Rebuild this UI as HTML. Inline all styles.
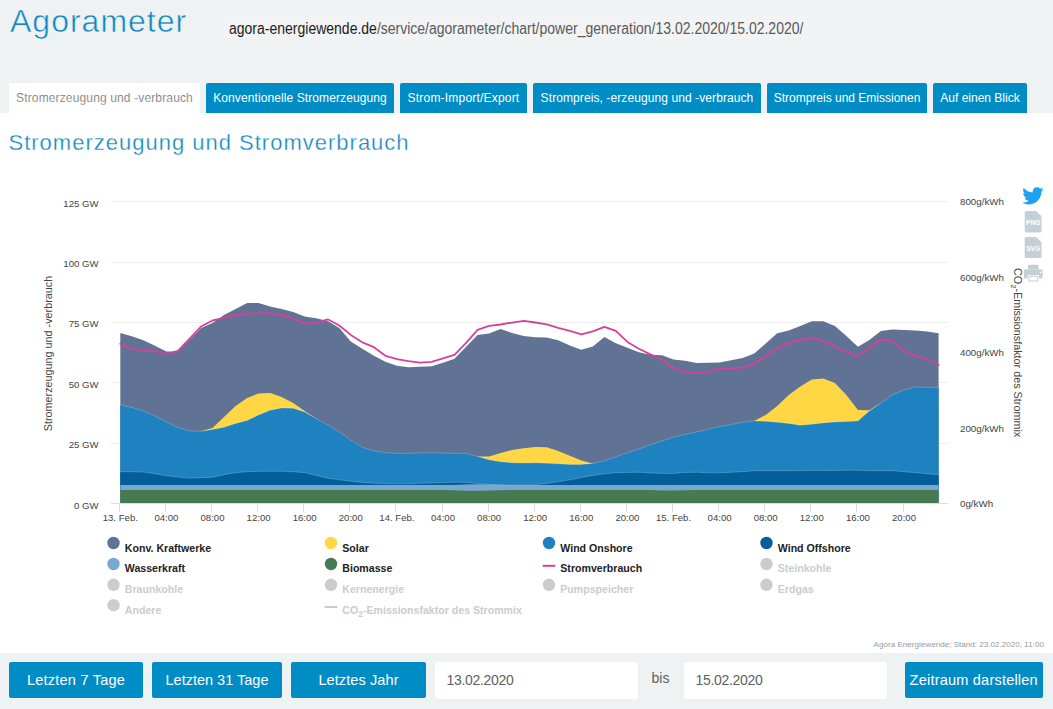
<!DOCTYPE html>
<html lang="de">
<head>
<meta charset="utf-8">
<title>Agorameter</title>
<style>
*{box-sizing:border-box;margin:0;padding:0}
html,body{width:1053px;height:709px;overflow:hidden;background:#fff}
body{font-family:"Liberation Sans",sans-serif;position:relative;color:#333}
.hdr{position:absolute;left:0;top:0;width:1053px;height:113px;background:#eff2f3}
.logo{position:absolute;left:10px;top:2.5px;font-size:32px;line-height:37px;letter-spacing:1px;color:#0f87c1;-webkit-text-stroke:.55px #eff2f3;white-space:nowrap}
.url{position:absolute;left:229.4px;top:19px;font-size:16px;line-height:20px;white-space:nowrap;color:#5a5a5a;transform:scaleX(.875);transform-origin:0 50%}
.url b{font-weight:400;color:#1b1b1b}
.tab{position:absolute;top:83px;height:30px;background:#008dc6;color:#fff;font-size:12px;line-height:30px;text-align:center;white-space:nowrap;border-radius:2px 2px 0 0}
.tab.act{background:#fff;color:#6a6a6a;-webkit-text-stroke:.2px #fff}
.tab span{display:inline-block}
h2{position:absolute;left:8.5px;top:130px;font-size:22px;line-height:26px;font-weight:400;letter-spacing:1px;color:#0f87c1;-webkit-text-stroke:.3px #fff;white-space:nowrap}
svg.chart{position:absolute;left:0;top:0}
.ft{position:absolute;left:0;top:653px;width:1053px;height:56px;background:#eff2f3}
.btn{position:absolute;top:662px;height:36px;background:#008dc6;color:#fff;font-size:14.5px;line-height:36px;text-align:center;border-radius:2px;white-space:nowrap}
.inp{position:absolute;top:662px;height:37px;background:#fff;border-radius:3px;color:#606060;font-size:14px;letter-spacing:-.3px;line-height:37px;padding-left:11.5px;white-space:nowrap}
.bis{position:absolute;left:651.5px;top:667.5px;font-size:14px;line-height:20px;color:#606060}
.credit{position:absolute;right:9px;top:640px;font-size:8.1px;line-height:10px;color:#999;white-space:nowrap}
</style>
</head>
<body>
<div class="hdr"></div>
<div style="position:absolute;left:224px;top:16px;width:584px;height:23px;background:#f1f3f4"></div>
<div class="logo">Agorameter</div>
<div class="url"><b>agora-energiewende.de</b>/service/agorameter/chart/power_generation/13.02.2020/15.02.2020/</div>

<div class="tab act" style="left:9px;width:191px"><span style="letter-spacing:.14px">Stromerzeugung und -verbrauch</span></div>
<div class="tab" style="left:206px;width:188px"><span style="letter-spacing:.1px">Konventionelle Stromerzeugung</span></div>
<div class="tab" style="left:400px;width:127px"><span style="letter-spacing:.2px">Strom-Import/Export</span></div>
<div class="tab" style="left:533px;width:228px"><span style="letter-spacing:.09px">Strompreis, -erzeugung und -verbrauch</span></div>
<div class="tab" style="left:767px;width:160px"><span>Strompreis und Emissionen</span></div>
<div class="tab" style="left:933px;width:94px"><span>Auf einen Blick</span></div>

<h2>Stromerzeugung und Stromverbrauch</h2>

<svg class="chart" width="1053" height="709" viewBox="0 0 1053 709" font-family="Liberation Sans, sans-serif">
<!-- gridlines -->
<g stroke="#eeeeee" stroke-width="1" shape-rendering="crispEdges">
<line x1="111" x2="948" y1="201.5" y2="201.5"/>
<line x1="111" x2="948" y1="262.5" y2="262.5"/>
<line x1="111" x2="948" y1="322.5" y2="322.5"/>
<line x1="111" x2="948" y1="382.5" y2="382.5"/>
<line x1="111" x2="948" y1="443.5" y2="443.5"/>
</g>

<path d="M120.3,332.9 L131.8,336.3 L143.3,340.3 L154.9,345.8 L166.4,351.4 L177.9,351.4 L189.4,339.9 L201.0,327.9 L212.5,322.9 L224.0,314.9 L235.6,308.9 L247.1,303.0 L258.6,303.0 L270.1,306.4 L281.6,308.9 L293.2,311.9 L304.7,316.5 L316.2,318.3 L327.8,320.9 L339.3,327.9 L350.8,341.5 L362.3,348.8 L373.9,355.8 L385.4,361.8 L396.9,365.8 L408.4,367.2 L420.0,366.8 L431.5,366.2 L443.0,362.8 L454.5,358.8 L466.1,346.8 L477.6,334.9 L489.1,333.5 L500.6,328.9 L512.1,332.9 L523.7,335.9 L535.2,337.3 L546.7,337.5 L558.2,340.3 L569.8,345.4 L581.3,349.8 L592.8,346.4 L604.4,336.9 L615.9,343.3 L627.4,347.8 L638.9,352.2 L650.4,354.8 L662.0,355.2 L673.5,359.4 L685.0,360.8 L696.5,363.0 L708.1,362.8 L719.6,362.6 L731.1,360.2 L742.6,358.0 L754.2,353.5 L765.7,343.4 L777.2,333.2 L788.8,330.5 L800.3,325.9 L811.8,321.3 L823.3,321.3 L834.9,325.9 L846.4,335.9 L857.9,346.8 L869.4,339.9 L880.9,330.9 L892.5,329.5 L904.0,329.9 L915.5,330.5 L927.0,331.5 L938.6,333.3 L938.6,503.5 L120.3,503.5Z" fill="#617394"/>
<path d="M201.0,431.3 L212.5,427.9 L224.0,416.9 L235.6,405.9 L247.1,398.0 L258.6,393.6 L270.1,393.0 L281.6,397.0 L293.2,402.9 L304.7,410.9 L316.2,418.7 L316.2,419.3 L304.7,412.5 L293.2,408.9 L281.6,408.5 L270.1,410.9 L258.6,415.5 L247.1,421.1 L235.6,424.1 L224.0,427.9 L212.5,430.1 L201.0,431.9Z" fill="#ffd744"/>
<path d="M477.6,456.4 L489.1,456.4 L500.6,452.9 L512.1,450.1 L523.7,448.3 L535.2,446.9 L546.7,447.3 L558.2,450.9 L569.8,455.8 L581.3,460.4 L592.8,463.4 L592.8,464.0 L581.3,465.0 L569.8,465.0 L558.2,464.4 L546.7,463.8 L535.2,463.4 L523.7,463.6 L512.1,463.3 L500.6,462.4 L489.1,460.4 L477.6,457.0Z" fill="#ffd744"/>
<path d="M754.2,420.9 L765.7,414.9 L777.2,405.9 L788.8,394.9 L800.3,386.6 L811.8,379.4 L823.3,378.4 L834.9,383.0 L846.4,394.9 L857.9,409.9 L869.4,410.3 L880.9,402.9 L880.9,403.5 L869.4,411.5 L857.9,421.5 L846.4,422.1 L834.9,422.5 L823.3,423.5 L811.8,424.8 L800.3,425.8 L788.8,424.1 L777.2,422.9 L765.7,421.9 L754.2,421.5Z" fill="#ffd744"/>

<path d="M120.3,404.9 L131.8,407.5 L143.3,410.9 L154.9,415.9 L166.4,421.9 L177.9,427.3 L189.4,430.9 L201.0,431.3 L212.5,429.5 L224.0,427.3 L235.6,423.5 L247.1,420.5 L258.6,414.9 L270.1,410.3 L281.6,407.9 L293.2,408.3 L304.7,411.9 L316.2,418.7 L327.8,424.9 L339.3,431.9 L350.8,440.3 L362.3,447.3 L373.9,450.9 L385.4,452.5 L396.9,453.4 L408.4,453.4 L420.0,452.9 L431.5,452.7 L443.0,453.1 L454.5,453.3 L466.1,453.4 L477.6,456.4 L489.1,459.8 L500.6,461.8 L512.1,462.7 L523.7,463.0 L535.2,462.8 L546.7,463.2 L558.2,463.8 L569.8,464.4 L581.3,464.4 L592.8,463.4 L604.4,460.8 L615.9,456.8 L627.4,452.9 L638.9,448.9 L650.4,444.9 L662.0,440.9 L673.5,437.3 L685.0,434.5 L696.5,431.9 L708.1,429.3 L719.6,426.5 L731.1,424.5 L742.6,422.3 L754.2,420.9 L765.7,421.3 L777.2,422.3 L788.8,423.5 L800.3,425.2 L811.8,424.2 L823.3,422.9 L834.9,421.9 L846.4,421.5 L857.9,420.9 L869.4,410.9 L880.9,402.9 L892.5,394.9 L904.0,389.9 L915.5,387.0 L927.0,387.4 L938.6,387.4 L938.6,503.5 L120.3,503.5Z" fill="#1f82c0"/>
<path d="M120.3,471.7 L131.8,471.7 L143.3,472.1 L154.9,473.7 L166.4,475.7 L177.9,477.1 L189.4,478.1 L201.0,477.7 L212.5,477.3 L224.0,474.7 L235.6,472.7 L247.1,471.7 L258.6,471.3 L270.1,471.3 L281.6,471.3 L293.2,471.7 L304.7,472.7 L316.2,475.5 L327.8,478.2 L339.3,479.8 L350.8,481.2 L362.3,482.4 L373.9,483.2 L385.4,483.6 L396.9,483.8 L408.4,483.8 L420.0,483.2 L431.5,483.0 L443.0,482.6 L454.5,482.2 L466.1,482.4 L477.6,483.4 L489.1,484.6 L500.6,484.8 L512.1,484.8 L523.7,484.8 L535.2,484.6 L546.7,483.4 L558.2,481.8 L569.8,479.8 L581.3,477.4 L592.8,475.4 L604.4,473.8 L615.9,472.8 L627.4,472.4 L638.9,472.2 L650.4,473.0 L662.0,473.4 L673.5,473.4 L685.0,472.6 L696.5,472.2 L708.1,472.8 L719.6,472.8 L731.1,472.3 L742.6,471.7 L754.2,470.7 L765.7,470.7 L777.2,470.7 L788.8,470.7 L800.3,470.6 L811.8,470.5 L823.3,470.5 L834.9,470.4 L846.4,470.3 L857.9,470.3 L869.4,470.7 L880.9,470.7 L892.5,470.7 L904.0,471.7 L915.5,472.7 L927.0,473.7 L938.6,474.7 L938.6,503.5 L120.3,503.5Z" fill="#035e99"/>
<path d="M120.3,485.1 L131.8,485.1 L143.3,485.1 L154.9,485.1 L166.4,485.1 L177.9,485.1 L189.4,485.1 L201.0,485.1 L212.5,485.1 L224.0,485.1 L235.6,485.1 L247.1,485.1 L258.6,485.1 L270.1,485.1 L281.6,485.1 L293.2,485.1 L304.7,485.1 L316.2,485.1 L327.8,485.1 L339.3,485.1 L350.8,485.1 L362.3,485.1 L373.9,485.1 L385.4,485.1 L396.9,485.1 L408.4,485.1 L420.0,485.1 L431.5,485.1 L443.0,485.1 L454.5,485.1 L466.1,484.6 L477.6,484.3 L489.1,484.4 L500.6,484.8 L512.1,485.1 L523.7,485.1 L535.2,485.1 L546.7,485.1 L558.2,485.1 L569.8,485.1 L581.3,485.1 L592.8,485.1 L604.4,485.1 L615.9,485.1 L627.4,485.1 L638.9,485.1 L650.4,485.1 L662.0,485.1 L673.5,485.1 L685.0,485.1 L696.5,485.1 L708.1,485.1 L719.6,485.1 L731.1,485.1 L742.6,485.1 L754.2,485.1 L765.7,485.1 L777.2,485.1 L788.8,485.1 L800.3,485.1 L811.8,485.1 L823.3,485.1 L834.9,485.1 L846.4,485.1 L857.9,485.1 L869.4,485.1 L880.9,485.1 L892.5,485.1 L904.0,485.1 L915.5,485.1 L927.0,485.1 L938.6,485.1 L938.6,503.5 L120.3,503.5Z" fill="#7aa7cf"/>
<path d="M120.3,490.0 L131.8,490.0 L143.3,490.0 L154.9,490.0 L166.4,490.0 L177.9,490.0 L189.4,490.0 L201.0,490.0 L212.5,490.0 L224.0,490.0 L235.6,490.0 L247.1,490.0 L258.6,490.0 L270.1,490.0 L281.6,490.0 L293.2,490.0 L304.7,490.0 L316.2,490.0 L327.8,490.0 L339.3,490.0 L350.8,490.0 L362.3,490.0 L373.9,490.0 L385.4,490.0 L396.9,490.0 L408.4,490.0 L420.0,490.0 L431.5,490.0 L443.0,490.0 L454.5,490.3 L466.1,490.7 L477.6,490.8 L489.1,490.6 L500.6,490.3 L512.1,490.0 L523.7,490.0 L535.2,490.0 L546.7,490.0 L558.2,490.0 L569.8,490.0 L581.3,490.0 L592.8,490.0 L604.4,490.0 L615.9,490.0 L627.4,490.0 L638.9,490.0 L650.4,490.0 L662.0,490.4 L673.5,490.6 L685.0,490.3 L696.5,490.0 L708.1,490.0 L719.6,490.0 L731.1,490.0 L742.6,490.0 L754.2,490.0 L765.7,490.0 L777.2,490.0 L788.8,490.0 L800.3,490.0 L811.8,490.0 L823.3,490.0 L834.9,490.0 L846.4,490.0 L857.9,490.0 L869.4,490.0 L880.9,490.0 L892.5,490.0 L904.0,490.0 L915.5,490.0 L927.0,490.0 L938.6,490.0 L938.6,503.5 L120.3,503.5Z" fill="#487a51"/>
<path d="M120.3,404.9 L131.8,407.5 L143.3,410.9 L154.9,415.9 L166.4,421.9 L177.9,427.3 L189.4,430.9 L201.0,431.3 L212.5,429.5 L224.0,427.3 L235.6,423.5 L247.1,420.5 L258.6,414.9 L270.1,410.3 L281.6,407.9 L293.2,408.3 L304.7,411.9 L316.2,418.7 L327.8,424.9 L339.3,431.9 L350.8,440.3 L362.3,447.3 L373.9,450.9 L385.4,452.5 L396.9,453.4 L408.4,453.4 L420.0,452.9 L431.5,452.7 L443.0,453.1 L454.5,453.3 L466.1,453.4 L477.6,456.4 L489.1,459.8 L500.6,461.8 L512.1,462.7 L523.7,463.0 L535.2,462.8 L546.7,463.2 L558.2,463.8 L569.8,464.4 L581.3,464.4 L592.8,463.4 L604.4,460.8 L615.9,456.8 L627.4,452.9 L638.9,448.9 L650.4,444.9 L662.0,440.9 L673.5,437.3 L685.0,434.5 L696.5,431.9 L708.1,429.3 L719.6,426.5 L731.1,424.5 L742.6,422.3 L754.2,420.9 L765.7,421.3 L777.2,422.3 L788.8,423.5 L800.3,425.2 L811.8,424.2 L823.3,422.9 L834.9,421.9 L846.4,421.5 L857.9,420.9 L869.4,410.9 L880.9,402.9 L892.5,394.9 L904.0,389.9 L915.5,387.0 L927.0,387.4 L938.6,387.4" fill="none" stroke="#fff" stroke-opacity=".3" stroke-width=".7"/>
<path d="M120.3,471.7 L131.8,471.7 L143.3,472.1 L154.9,473.7 L166.4,475.7 L177.9,477.1 L189.4,478.1 L201.0,477.7 L212.5,477.3 L224.0,474.7 L235.6,472.7 L247.1,471.7 L258.6,471.3 L270.1,471.3 L281.6,471.3 L293.2,471.7 L304.7,472.7 L316.2,475.5 L327.8,478.2 L339.3,479.8 L350.8,481.2 L362.3,482.4 L373.9,483.2 L385.4,483.6 L396.9,483.8 L408.4,483.8 L420.0,483.2 L431.5,483.0 L443.0,482.6 L454.5,482.2 L466.1,482.4 L477.6,483.4 L489.1,484.6 L500.6,484.8 L512.1,484.8 L523.7,484.8 L535.2,484.6 L546.7,483.4 L558.2,481.8 L569.8,479.8 L581.3,477.4 L592.8,475.4 L604.4,473.8 L615.9,472.8 L627.4,472.4 L638.9,472.2 L650.4,473.0 L662.0,473.4 L673.5,473.4 L685.0,472.6 L696.5,472.2 L708.1,472.8 L719.6,472.8 L731.1,472.3 L742.6,471.7 L754.2,470.7 L765.7,470.7 L777.2,470.7 L788.8,470.7 L800.3,470.6 L811.8,470.5 L823.3,470.5 L834.9,470.4 L846.4,470.3 L857.9,470.3 L869.4,470.7 L880.9,470.7 L892.5,470.7 L904.0,471.7 L915.5,472.7 L927.0,473.7 L938.6,474.7" fill="none" stroke="#fff" stroke-opacity=".3" stroke-width=".7"/>
<path d="M120.3,343.8 L131.8,349.2 L143.3,351.2 L154.9,350.8 L166.4,354.2 L177.9,350.8 L189.4,338.9 L201.0,326.5 L212.5,320.5 L224.0,317.9 L235.6,315.5 L247.1,313.9 L258.6,313.3 L270.1,313.1 L281.6,314.9 L293.2,318.9 L304.7,323.5 L316.2,322.9 L327.8,319.3 L339.3,325.5 L350.8,334.9 L362.3,342.3 L373.9,347.2 L385.4,355.8 L396.9,359.2 L408.4,361.2 L420.0,362.6 L431.5,361.8 L443.0,358.4 L454.5,354.8 L466.1,342.9 L477.6,329.9 L489.1,325.9 L500.6,324.5 L512.1,322.6 L523.7,320.9 L535.2,322.5 L546.7,324.3 L558.2,327.9 L569.8,330.9 L581.3,334.3 L592.8,331.3 L604.4,326.9 L615.9,330.9 L627.4,341.9 L638.9,348.8 L650.4,354.4 L662.0,359.8 L673.5,368.4 L685.0,371.8 L696.5,373.4 L708.1,371.6 L719.6,368.6 L731.1,368.7 L742.6,367.6 L754.2,364.1 L765.7,356.2 L777.2,348.2 L788.8,343.3 L800.3,339.9 L811.8,337.5 L823.3,340.9 L834.9,346.4 L846.4,351.8 L857.9,356.4 L869.4,347.8 L880.9,339.5 L892.5,340.9 L904.0,350.8 L915.5,355.8 L927.0,358.8 L938.6,364.8" fill="none" stroke="#d64198" stroke-width="1.8" stroke-linejoin="round" stroke-linecap="round"/>

<!-- x axis -->
<g stroke="#d6ddef" stroke-width="1" shape-rendering="crispEdges">
<line x1="111" x2="948" y1="503.5" y2="503.5"/>
<line x1="119.5" x2="119.5" y1="503.5" y2="512"/>
<line x1="165.5" x2="165.5" y1="503.5" y2="512"/>
<line x1="211.5" x2="211.5" y1="503.5" y2="512"/>
<line x1="257.5" x2="257.5" y1="503.5" y2="512"/>
<line x1="303.5" x2="303.5" y1="503.5" y2="512"/>
<line x1="349.5" x2="349.5" y1="503.5" y2="512"/>
<line x1="395.5" x2="395.5" y1="503.5" y2="512"/>
<line x1="442.5" x2="442.5" y1="503.5" y2="512"/>
<line x1="488.5" x2="488.5" y1="503.5" y2="512"/>
<line x1="534.5" x2="534.5" y1="503.5" y2="512"/>
<line x1="580.5" x2="580.5" y1="503.5" y2="512"/>
<line x1="626.5" x2="626.5" y1="503.5" y2="512"/>
<line x1="672.5" x2="672.5" y1="503.5" y2="512"/>
<line x1="718.5" x2="718.5" y1="503.5" y2="512"/>
<line x1="764.5" x2="764.5" y1="503.5" y2="512"/>
<line x1="810.5" x2="810.5" y1="503.5" y2="512"/>
<line x1="856.5" x2="856.5" y1="503.5" y2="512"/>
<line x1="903.5" x2="903.5" y1="503.5" y2="512"/>

</g>
<g font-size="9.6" fill="#444" text-anchor="middle">
<text x="120.3" y="520.7">13. Feb.</text>
<text x="166.4" y="520.7">04:00</text>
<text x="212.5" y="520.7">08:00</text>
<text x="258.6" y="520.7">12:00</text>
<text x="304.7" y="520.7">16:00</text>
<text x="350.8" y="520.7">20:00</text>
<text x="396.9" y="520.7">14. Feb.</text>
<text x="443.0" y="520.7">04:00</text>
<text x="489.1" y="520.7">08:00</text>
<text x="535.2" y="520.7">12:00</text>
<text x="581.3" y="520.7">16:00</text>
<text x="627.4" y="520.7">20:00</text>
<text x="673.5" y="520.7">15. Feb.</text>
<text x="719.6" y="520.7">04:00</text>
<text x="765.7" y="520.7">08:00</text>
<text x="811.8" y="520.7">12:00</text>
<text x="857.9" y="520.7">16:00</text>
<text x="904.0" y="520.7">20:00</text>
</g>
<g font-size="9.6" fill="#444" text-anchor="end">
<text x="98.5" y="206.5">125 GW</text>
<text x="98.5" y="266.9">100 GW</text>
<text x="98.5" y="327.3">75 GW</text>
<text x="98.5" y="387.7">50 GW</text>
<text x="98.5" y="448.1">25 GW</text>
<text x="98.5" y="508.5">0 GW</text>
</g>
<g font-size="9.75" fill="#444" text-anchor="start">
<text x="960" y="205.3">800g/kWh</text>
<text x="960" y="280.8">600g/kWh</text>
<text x="960" y="356.3">400g/kWh</text>
<text x="960" y="431.8">200g/kWh</text>
<text x="960" y="507.3">0g/kWh</text>
</g>
<text font-size="10.8" fill="#444" text-anchor="middle" transform="translate(52,353.5) rotate(-90)">Stromerzeugung und -verbrauch</text>
<text font-size="10.8" fill="#444" text-anchor="middle" transform="translate(1013.9,352.6) rotate(90)">CO<tspan font-size="7.5" dy="2.5">2</tspan><tspan dy="-2.5">-Emissionsfaktor des Strommix</tspan></text>
<g font-size="10.6" font-weight="bold">
<circle cx="113.5" cy="543" r="6.2" fill="#617394"/>
<text x="124.8" y="551.7" fill="#222">Konv. Kraftwerke</text>
<circle cx="331" cy="543" r="6.2" fill="#ffd744"/>
<text x="342.3" y="551.7" fill="#222">Solar</text>
<circle cx="549" cy="543" r="6.2" fill="#1f82c0"/>
<text x="560.3" y="551.7" fill="#222">Wind Onshore</text>
<circle cx="766.5" cy="543" r="6.2" fill="#035e99"/>
<text x="777.8" y="551.7" fill="#222">Wind Offshore</text>
<circle cx="113.5" cy="564" r="6.2" fill="#7aa7cf"/>
<text x="124.8" y="571.6" fill="#222">Wasserkraft</text>
<circle cx="331" cy="564" r="6.2" fill="#487a51"/>
<text x="342.3" y="571.6" fill="#222">Biomasse</text>
<line x1="542.7" x2="555.3" y1="565.8" y2="565.8" stroke="#d64198" stroke-width="2"/>
<text x="560.3" y="571.6" fill="#222">Stromverbrauch</text>
<circle cx="766.5" cy="564" r="6.2" fill="#ccc"/>
<text x="777.8" y="571.6" fill="#ccc">Steinkohle</text>
<circle cx="113.5" cy="584.8" r="6.2" fill="#ccc"/>
<text x="124.8" y="593.2" fill="#ccc">Braunkohle</text>
<circle cx="331" cy="584.8" r="6.2" fill="#ccc"/>
<text x="342.3" y="593.2" fill="#ccc">Kernenergie</text>
<circle cx="549" cy="584.8" r="6.2" fill="#ccc"/>
<text x="560.3" y="593.2" fill="#ccc">Pumpspeicher</text>
<circle cx="766.5" cy="584.8" r="6.2" fill="#ccc"/>
<text x="777.8" y="593.2" fill="#ccc">Erdgas</text>
<circle cx="113.5" cy="605.2" r="6.2" fill="#ccc"/>
<text x="124.8" y="614.2" fill="#ccc">Andere</text>
<line x1="324.7" x2="337.3" y1="607.0" y2="607.0" stroke="#ccc" stroke-width="2"/>
<text x="342.3" y="614.2" fill="#ccc">CO<tspan font-size="8.5" dy="2.5">2</tspan><tspan dy="-2.5">-Emissionsfaktor des Strommix</tspan></text>
</g>

<!-- twitter -->
<g transform="translate(1022.3,187) scale(0.885)">
<path fill="#1da1f2" d="M23.954 2.569c-.885.389-1.83.654-2.825.775 1.014-.611 1.794-1.574 2.163-2.723-.951.555-2.005.959-3.127 1.184-.896-.959-2.173-1.559-3.591-1.559-2.717 0-4.92 2.203-4.920 4.917 0 .39.045.765.127 1.124C7.691 6.094 4.066 4.13 1.64 1.161c-.427.722-.666 1.561-.666 2.475 0 1.71.87 3.213 2.188 4.096-.807-.026-1.566-.248-2.228-.616v.061c0 2.385 1.693 4.374 3.946 4.827-.413.111-.849.171-1.296.171-.314 0-.615-.03-.916-.086.631 1.953 2.445 3.377 4.604 3.417-1.68 1.319-3.809 2.105-6.102 2.105-.39 0-.779-.023-1.17-.067 2.189 1.394 4.768 2.209 7.557 2.209 9.054 0 13.999-7.496 13.999-13.986 0-.209 0-.42-.015-.63.961-.689 1.800-1.560 2.460-2.548l-.047-.02z"/>
</g>
<!-- PNG file -->
<g fill="#c5d0d6">
<path d="M1026.2,211 h10 l5.3,5.3 v14.7 a1.5,1.500,0,0,1,-1.5,1.5 h-13.8 a1.5,1.500,0,0,1,-1.5,-1.500 v-18.500 a1.5,1.500,0,0,1,1.5,-1.500z"/>
<path d="M1026.2,237 h10 l5.3,5.3 v14.100 a1.5,1.500,0,0,1,-1.5,1.5 h-13.800 a1.5,1.500,0,0,1,-1.500,-1.500 v-17.900 a1.5,1.500,0,0,1,1.500,-1.500z"/>
<!-- printer -->
<rect x="1028" y="264.700" width="10.500" height="4.500" rx="0.8"/>
<path d="M1025.500,269.200 h15.500 a1.600,1.600,0,0,1,1.600,1.600 v6.600 a1,1,0,0,1,-1,1 h-2.600 v-3.400 h-11.500 v3.400 h-2.600 a1,1,0,0,1,-1,-1 v-6.600 a1.600,1.600,0,0,1,1.600,-1.600z"/>
<path d="M1028.300,275.800 h9.900 v5.600 h-9.900z M1029.300,276.800 v3.600 h7.900 v-3.600z" fill-rule="evenodd"/>
</g>
<circle cx="1040.6" cy="272.4" r=".9" fill="#fff"/>
<g font-size="7" font-weight="bold" fill="#fff" text-anchor="middle">
<text x="1033.200" y="225.200" textLength="14.500" lengthAdjust="spacingAndGlyphs">PNG</text>
<text x="1033.200" y="251.200" textLength="14" lengthAdjust="spacingAndGlyphs">SVG</text>
</g>

</svg>

<div class="ft"></div>
<div class="btn" style="left:9px;width:134px;letter-spacing:.24px">Letzten 7 Tage</div>
<div class="btn" style="left:152px;width:130px">Letzten 31 Tage</div>
<div class="btn" style="left:291px;width:135px;letter-spacing:.1px">Letztes Jahr</div>
<div class="inp" style="left:435px;width:203px">13.02.2020</div>
<div class="bis">bis</div>
<div class="inp" style="left:684px;width:203px">15.02.2020</div>
<div class="btn" style="left:904.5px;width:138.5px;letter-spacing:.22px">Zeitraum darstellen</div>
<div class="credit">Agora Energiewende; Stand: 23.02.2020, 11:00</div>
</body>
</html>
